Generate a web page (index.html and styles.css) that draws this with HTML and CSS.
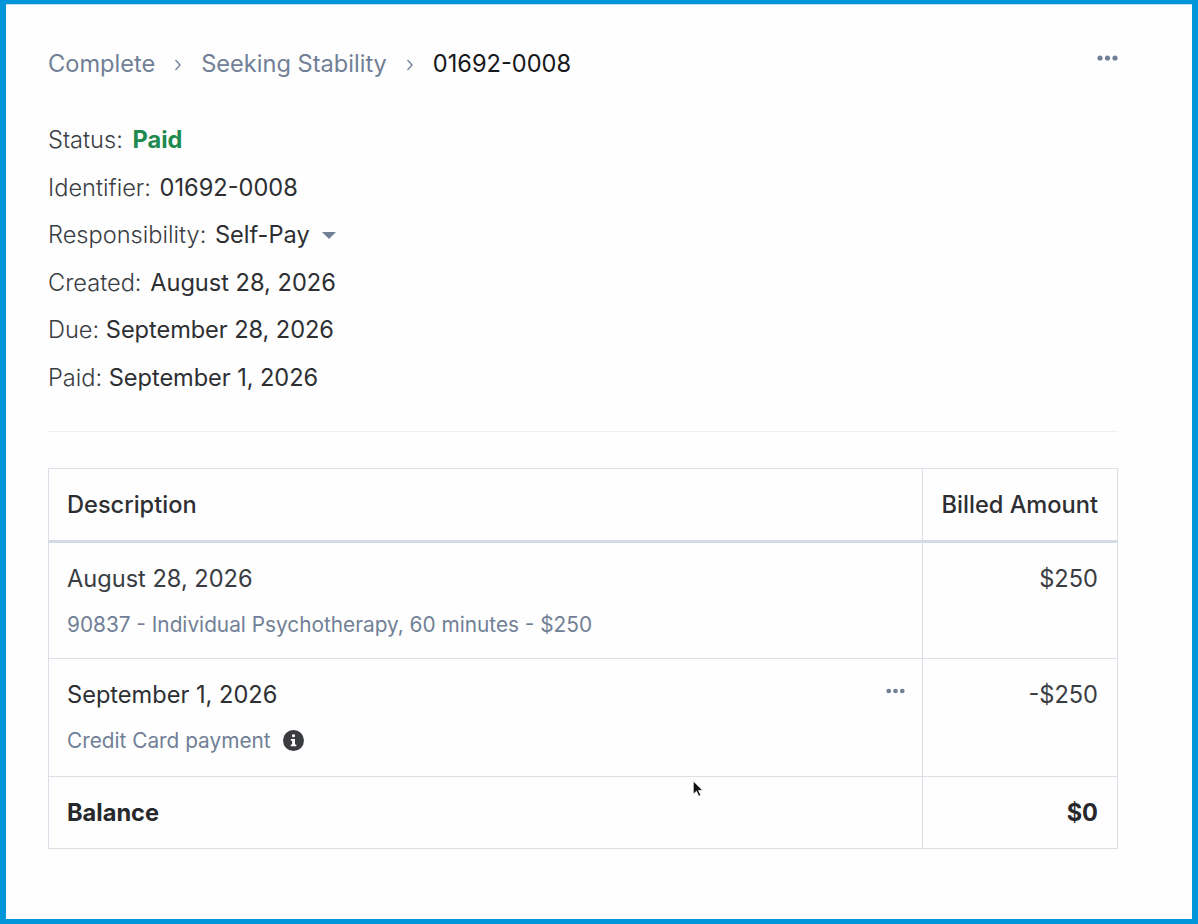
FILE: index.html
```html
<!DOCTYPE html>
<html lang="en">
<head>
<meta charset="utf-8">
<title>Invoice 01692-0008</title>
<link rel="stylesheet" href="styles.css">
</head>
<body>
<div class="frame">
  <main class="page">
    <header class="topbar">
      <nav class="crumbs">
        <a class="crumb">Complete</a>
        <svg class="sep" viewBox="0 0 8 14"><path d="M1.5 2l4.6 5-4.6 5" fill="none" stroke="#718096" stroke-width="1.3"/></svg>
        <a class="crumb">Seeking Stability</a>
        <svg class="sep" viewBox="0 0 8 14"><path d="M1.5 2l4.6 5-4.6 5" fill="none" stroke="#718096" stroke-width="1.3"/></svg>
        <span class="crumb-current">01692-0008</span>
      </nav>
      <svg class="dots dots-top" viewBox="0 0 21 6"><circle cx="3" cy="3" r="2.6"/><circle cx="10.5" cy="3" r="2.6"/><circle cx="18" cy="3" r="2.6"/></svg>
    </header>

    <section class="meta">
      <p class="meta-row">Status: <strong class="paid">Paid</strong></p>
      <p class="meta-row">Identifier: <span class="val">01692-0008</span></p>
      <p class="meta-row">Responsibility: <span class="val">Self-Pay</span><span class="caret"></span></p>
      <p class="meta-row">Created: <span class="val">August 28, 2026</span></p>
      <p class="meta-row">Due: <span class="val-tight">September 28, 2026</span></p>
      <p class="meta-row">Paid: <span class="val-tight">September 1, 2026</span></p>
    </section>

    <hr class="rule">

    <table class="ledger">
      <thead>
        <tr class="head-row"><th class="col-desc">Description</th><th class="col-amt">Billed Amount</th></tr>
      </thead>
      <tbody>
        <tr class="item-row">
          <td class="col-desc">
            <div class="item-date">August 28, 2026</div>
            <div class="item-sub">90837 - Individual Psychotherapy, 60 minutes - $250</div>
          </td>
          <td class="col-amt">$250</td>
        </tr>
        <tr class="item-row item-row-b">
          <td class="col-desc has-menu">
            <div class="item-date">September 1, 2026</div>
            <div class="item-sub">Credit Card payment
              <svg class="info" viewBox="0 0 21 21"><circle cx="10.5" cy="10.5" r="10.5" fill="#3a3c40"/><rect x="9" y="4.2" width="3" height="3" rx="1.2" fill="#fff"/><path d="M7.8 9h4.2v5.6h1.3v1.7H7.8v-1.7h1.3v-3.9H7.8z" fill="#fff"/></svg>
            </div>
            <svg class="dots dots-row" viewBox="0 0 21 6"><circle cx="3" cy="3" r="2.6"/><circle cx="10.5" cy="3" r="2.6"/><circle cx="18" cy="3" r="2.6"/></svg>
          </td>
          <td class="col-amt">-$250</td>
        </tr>
        <tr class="total-row"><td class="col-desc">Balance</td><td class="col-amt">$0</td></tr>
      </tbody>
    </table>
  </main>
  <svg class="cursor" viewBox="0 0 12 19"><path d="M1 1v14l3.4-3.2 2.4 5.4 2.2-1-2.4-5.2H11z" fill="#111" stroke="#fff" stroke-width=".8"/></svg>
</div>
</body>
</html>
```
FILE: styles.css
```css
* { box-sizing: border-box; }
html, body { margin: 0; height: 100%; }
body {
  background: #0096d9;
  font-family: Inter, "Liberation Sans", sans-serif;
  color: #2d2f33;
}
.frame {
  position: relative;
  height: 924px;
  padding: 4px 6px 5px;
}
.page {
  height: 100%;
  background: #fefefe;
  padding: 0 74px 0 42px;
  border-top: 1px solid #bcdff3;
}
.topbar {
  display: flex;
  justify-content: space-between;
  align-items: flex-start;
  padding-top: 43px;
  height: 111px;
}
.crumbs {
  display: flex;
  align-items: center;
  font-size: 23.6px;
  line-height: 32px;
}
.crumb { color: #718096; }
.crumb-current { color: #16181c; }
.sep { width: 8px; height: 14px; margin: 2px 19px 0 19px; flex: none; }
.dots { fill: #718096; display: block; }
.dots-top { width: 21px; height: 6px; margin-top: 7px; }
.meta { display: flex; flex-direction: column; }
.meta-row {
  margin: 0;
  height: 47.6px;
  font-size: 23.6px;
  line-height: 47.6px;
  font-weight: 300;
  color: #3a3d42;
}
.val { font-weight: 400; color: #2d2f33; margin-left: 2px; }
.val-tight { font-weight: 400; color: #2d2f33; letter-spacing: -0.06px; }
.paid { font-weight: 700; color: #1f8a50; margin-left: 3px; }
.caret {
  display: inline-block;
  width: 0; height: 0;
  margin-left: 12px;
  vertical-align: 4px;
  border-left: 7px solid transparent;
  border-right: 7px solid transparent;
  border-top: 7px solid #718096;
}
.rule {
  margin: 29px 0 36px;
  border: 0;
  border-top: 1px solid #edf0f5;
}
.ledger {
  width: 100%;
  border-collapse: collapse;
  font-size: 23.6px;
}
.ledger th, .ledger td {
  border: 1px solid #dcdfe8;
  padding: 0 19px 0 18px;
}
.ledger th { font-weight: 500; text-align: left; color: #2d2f33; }
.head-row { height: 73px; }
.head-row th { border-bottom: 3px solid #d3dce6; }
.col-amt { width: 195px; }
.ledger .col-amt { text-align: right; }
.item-row { height: 117px; }
.item-row-b { height: 118px; }
.item-row td { vertical-align: top; padding-top: 20px; line-height: 32px; color: #3a3d42; }
.item-date { color: #3a3d42; }
.item-row-b .item-date { color: #2d2f33; }
.item-sub {
  margin-top: 15px;
  display: flex;
  align-items: center;
  gap: 12px;
  font-size: 20.8px;
  line-height: 30px;
  color: #718096;
}
.has-menu { position: relative; }
.dots-row { position: absolute; top: 29px; right: 17px; width: 19px; height: 6px; }
.info { width: 21px; height: 21px; }
.total-row { height: 72px; }
.total-row td { font-weight: 700; color: #26282c; }
.cursor { position: absolute; left: 692px; top: 780px; width: 12px; height: 18px; }
```
